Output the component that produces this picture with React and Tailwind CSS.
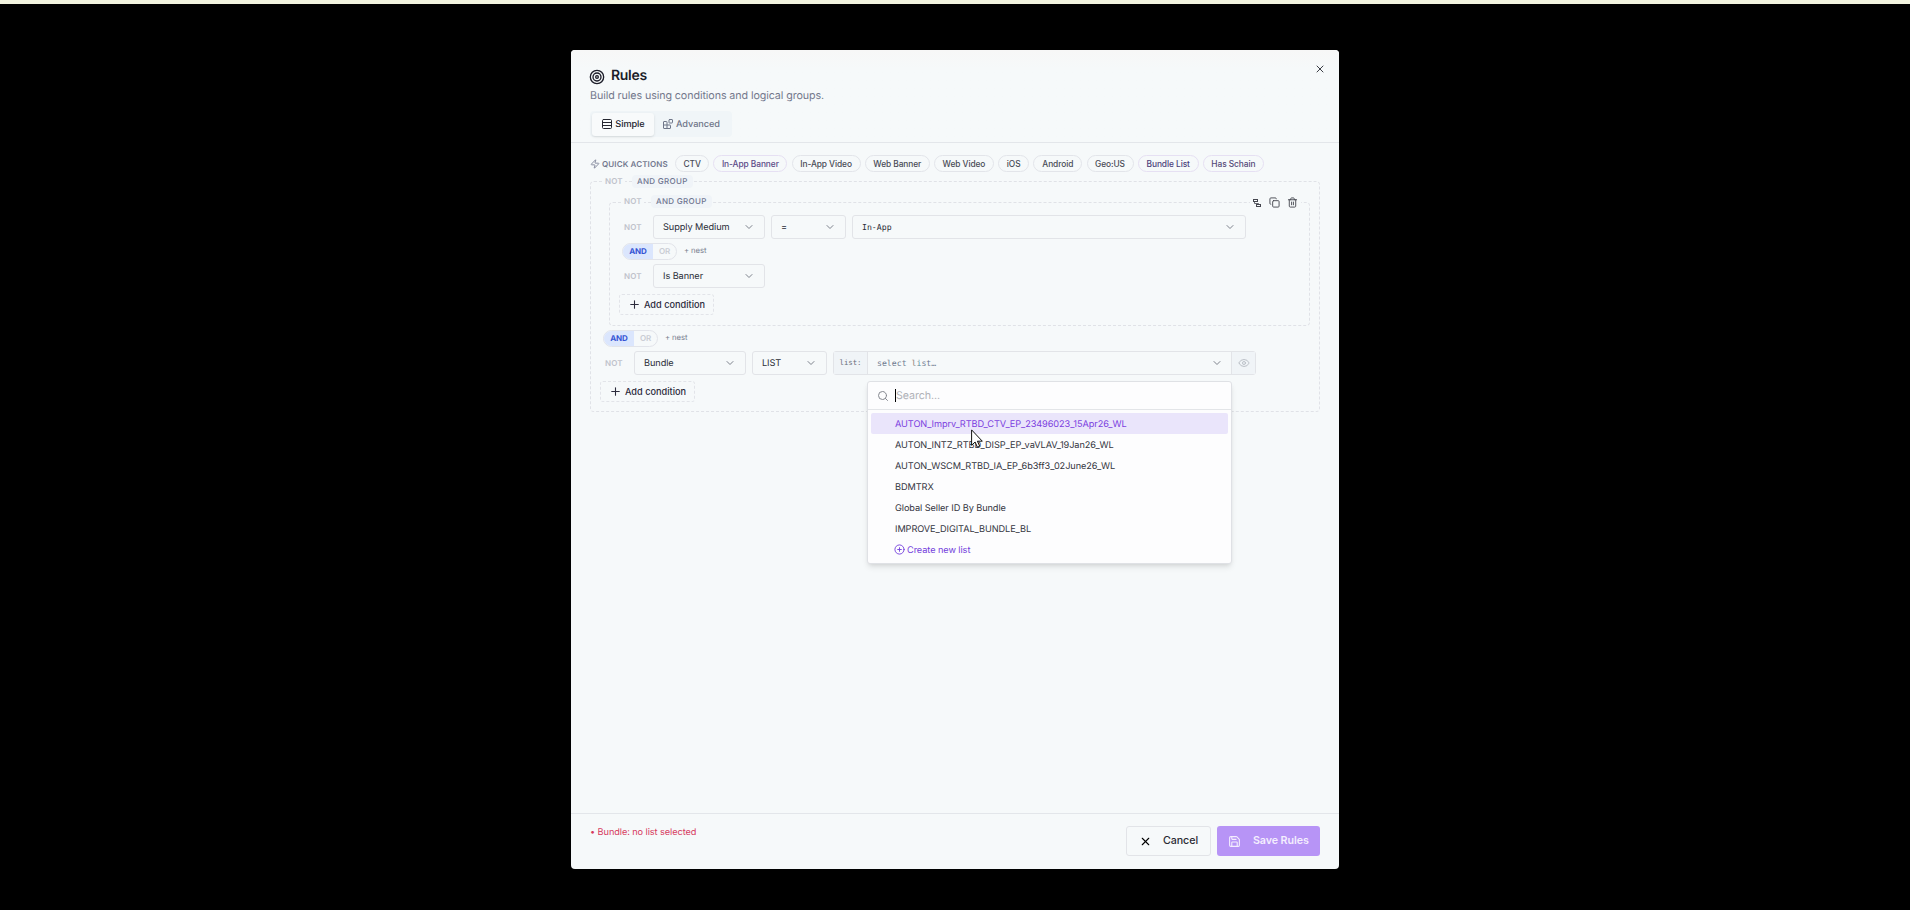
import { useState } from "react";
import {
  LuBlocks,
  LuChevronDown,
  LuCirclePlus,
  LuCopy,
  LuEye,
  LuPlus,
  LuRows3,
  LuSave,
  LuSearch,
  LuTarget,
  LuTrash2,
  LuX,
  LuZap,
} from "react-icons/lu";

const quickActions = [
  { label: "CTV", style: "w-[34px] text-[#484b56] border-[#e3e5ea]" },
  { label: "In-App Banner", style: "w-[74px] text-[#5b4a86] border-[#e6e0f3]" },
  { label: "In-App Video", style: "w-[69px] text-[#484b56] border-[#e3e5ea]" },
  { label: "Web Banner", style: "w-[65px] text-[#484b56] border-[#e3e5ea]" },
  { label: "Web Video", style: "w-[60px] text-[#484b56] border-[#e3e5ea]" },
  { label: "iOS", style: "w-[31px] text-[#484b56] border-[#e3e5ea]" },
  { label: "Android", style: "w-[49px] text-[#484b56] border-[#e3e5ea]" },
  { label: "Geo:US", style: "w-[47px] text-[#484b56] border-[#e3e5ea]" },
  { label: "Bundle List", style: "w-[61px] text-[#4b3f7a] border-[#e6e0f3]" },
  { label: "Has Schain", style: "w-[61px] text-[#544a78] border-[#e6e0f3]" },
];

const lists = [
  "AUTON_Imprv_RTBD_CTV_EP_23496023_15Apr26_WL",
  "AUTON_INTZ_RTBD_DISP_EP_vaVLAV_19Jan26_WL",
  "AUTON_WSCM_RTBD_IA_EP_6b3ff3_02June26_WL",
  "BDMTRX",
  "Global Seller ID By Bundle",
  "IMPROVE_DIGITAL_BUNDLE_BL",
];

function Not() {
  return (
    <span className="w-[29px] shrink-0 text-[8px] font-semibold tracking-[0.2px] text-[#bfc2cb]">
      NOT
    </span>
  );
}

function SelectBox({ className, children }) {
  return (
    <div
      className={`flex h-6 shrink-0 items-center justify-between rounded-[3px] border border-[#e2e4e8] pl-[9px] pr-[9px] text-[#2b2d38] ${className}`}
    >
      <span>{children}</span>
      <LuChevronDown className="size-[12px] text-[#7d828c]" />
    </div>
  );
}

function Joiner() {
  return (
    <div className="flex h-[17px] items-center">
      <div className="flex h-full w-[55px] overflow-hidden rounded-full border border-[#e2e4ea] text-[8px] font-semibold">
        <span className="flex w-[30px] items-center justify-center bg-[#dbe6fd] pb-px font-bold text-[#3555d4]">
          AND
        </span>
        <span className="flex flex-1 items-center justify-center pb-px text-[#c9ccd3]">OR</span>
      </div>
      <span className="ml-[7px] pb-px text-[7.7px] text-[#7b8090]">+ nest</span>
    </div>
  );
}

function AddCondition() {
  return (
    <button className="flex h-[21px] w-[95px] items-center justify-center gap-[3px] rounded-[3px] border border-dashed border-[#e2e4e9] font-medium text-[#2c2b3c]">
      <LuPlus className="size-[13px]" />
      <span className="tracking-normal">Add condition</span>
    </button>
  );
}

// labels sitting on top of a group's dashed border
function GroupLegend({ className }) {
  return (
    <div
      className={`absolute left-[12px] flex h-[14px] items-center text-[8px] font-medium tracking-[0.3px] ${className}`}
    >
      <span className="bg-[#f6f9fa] px-[2px] font-semibold tracking-[0.2px] text-[#bfc2cb]">
        NOT
      </span>
      <span className="ml-[7px] flex h-[13px] w-[61px] items-center justify-center rounded-sm bg-[#f0f4f8] text-[#6f7590]">
        AND GROUP
      </span>
    </div>
  );
}

function NestIcon() {
  return (
    <svg
      viewBox="0 0 8 8"
      className="mr-px size-[8px]"
      fill="none"
      stroke="currentColor"
      strokeWidth="1"
    >
      <rect x="0.5" y="0.5" width="4" height="2" />
      <rect x="3.5" y="5.5" width="4" height="2" />
      <path d="M1.5 2.5v2h4v1" strokeWidth="0.8" />
    </svg>
  );
}

export default function App() {
  const [active, setActive] = useState(0);

  return (
    <div className="flex h-[910px] w-[1910px] flex-col overflow-hidden bg-black font-['Inter',sans-serif] text-[9.2px] leading-none tracking-[-0.08px] [text-rendering:geometricPrecision]">
      <div className="h-1 shrink-0 bg-[#f2f4e0]" />

      <div className="relative ml-[571px] mt-[46px] flex h-[819px] w-[768px] flex-col rounded-[4px] bg-[#f6f9fa]">
        <LuX className="absolute right-[13px] top-[13px] size-[12px] text-[#3b3d45]" />

        {/* header */}
        <div className="flex h-[93px] shrink-0 flex-col items-start rounded-t-[4px] border-b border-[#e3e6ea] bg-linear-to-b from-[#f7f7f7] to-[#f6f9fa] to-20% pl-[19px] pt-[18px]">
          <div className="flex h-[16px] items-center gap-[5px] text-[#1b1c28]">
            <LuTarget className="-ml-[1px] mt-px size-[16px]" />
            <h1 className="ml-px text-[14px] font-semibold tracking-[-0.3px]">Rules</h1>
          </div>
          <p className="mt-[5px] text-[10.7px] leading-[13px] text-[#73788c]">
            Build rules using conditions and logical groups.
          </p>
          <div className="mt-[9px] flex h-[26px] items-center rounded-[4px] bg-[#f0f5f8] pl-[2px] font-medium">
            <div className="flex h-[23px] w-[62px] items-center justify-center gap-[2px] rounded-[3px] bg-[#f8fafb] text-[#24252f] shadow-sm">
              <LuRows3 className="size-[12px]" />
              <span className="pt-[2px]">Simple</span>
            </div>
            <div className="flex h-[23px] w-[78px] items-center gap-[2px] pl-[8px] text-[#6f7689]">
              <LuBlocks className="size-[12px]" />
              <span className="pt-[2px]">Advanced</span>
            </div>
          </div>
        </div>

        <div className="flex flex-1 flex-col px-[19px] pt-[12px]">
          <div className="flex h-[17px] items-center gap-[4.2px]">
            <div className="flex w-[81px] items-center gap-[2px] text-[8px] font-semibold tracking-[0.12px] text-[#73788f]">
              <LuZap className="size-[10px]" />
              QUICK ACTIONS
            </div>
            {quickActions.map((action) => (
              <button
                key={action.label}
                className={`flex h-[17px] shrink-0 items-center justify-center whitespace-nowrap rounded-full border pt-[2px] text-[8.4px] font-medium ${action.style}`}
              >
                {action.label}
              </button>
            ))}
          </div>

          {/* outer group */}
          <div className="relative mt-[9px] h-[231px] w-[730px] rounded-[4px] border border-dashed border-[#e0e2e7]">
            <GroupLegend className="-top-[8px]" />

            {/* inner group */}
            <div className="relative ml-[18px] mt-[20px] h-[124px] w-[701px] rounded-[4px] border border-dashed border-[#e0e2e7] pt-[12px]">
              <GroupLegend className="-top-[9px]" />
              <div className="absolute -top-[7px] right-[8px] flex h-[13px] items-center gap-[7px] bg-[#f6f9fa] px-[3px] text-[#45474f]">
                <NestIcon />
                <LuCopy className="size-[11px]" />
                <LuTrash2 className="size-[11px]" />
              </div>
              <div className="flex items-center pl-[14px]">
                <Not />
                <SelectBox className="w-[112px] *:first:pt-[2px]">Supply Medium</SelectBox>
                <SelectBox className="ml-[6px] w-[75px] *:first:pt-[2px]">=</SelectBox>
                <SelectBox className="ml-[6px] w-[394px] font-['DejaVu_Sans_Mono',monospace] text-[8.2px] tracking-normal">
                  In-App
                </SelectBox>
              </div>
              <div className="mt-1 pl-[12px]">
                <Joiner />
              </div>
              <div className="mt-1 flex items-center pl-[14px]">
                <Not />
                <SelectBox className="w-[112px] *:first:pt-[2px]">Is Banner</SelectBox>
              </div>
              <div className="mt-[6px] pl-[9px]">
                <AddCondition />
              </div>
            </div>

            <div className="mt-1 pl-[12px]">
              <Joiner />
            </div>
            <div className="mt-1 flex items-center pl-[14px]">
              <Not />
              <SelectBox className="w-[112px] *:first:pt-[2px]">Bundle</SelectBox>
              <SelectBox className="ml-[6px] w-[75px] *:first:pt-[2px]">LIST</SelectBox>
              <div className="relative ml-[6px] flex h-6 w-[423px] rounded-[3px] border border-[#e2e4e8] font-['DejaVu_Sans_Mono',monospace]">
                <span className="flex w-[34px] items-center justify-center border-r border-[#e2e4e8] bg-[#f0f4f7] text-[7.4px] text-[#6a6f7b]">
                  list:
                </span>
                <div className="flex flex-1 items-center justify-between pl-[9px] pr-[8px] text-[8.2px] tracking-normal text-[#6f7a90]">
                  <span>
                    select <span className="text-[#8a7f74]">l</span>
                    <span className="text-[#5f8f9c]">i</span>st…
                  </span>
                  <LuChevronDown className="size-[12px] text-[#7d828c]" />
                </div>
                <span className="flex w-[24px] items-center justify-center border-l border-[#e2e4e8] bg-[#f0f4f7] text-[#bcc1c8]">
                  <LuEye className="size-[12px]" />
                </span>

                {/* list picker */}
                <div className="absolute left-[33px] top-[29px] z-10 h-[183px] w-[365px] rounded-[3px] border border-[#dfe1e5] bg-[#fdfdfe] font-['Inter',sans-serif] shadow-md">
                  <div className="flex h-[28px] items-center border-b border-[#e3e5e8] pl-[9px]">
                    <LuSearch className="size-[12px] text-[#85888f]" />
                    <span className="ml-[6px] h-[13px] w-px bg-black" />
                    <span className="pt-[2px] text-[10.7px] text-[#b0b2b8]">Search...</span>
                  </div>
                  <div className="px-[3px] pt-[3px] text-[#34353f]">
                    {lists.map((name, i) => (
                      <div
                        key={name}
                        onMouseEnter={() => setActive(i)}
                        className={`flex h-[21px] items-center rounded-[2px] pl-[24px] pt-[2px] ${
                          active === i ? "bg-[#eae5fb] text-[#7c3fe0]" : ""
                        }`}
                      >
                        {name}
                      </div>
                    ))}
                    <div className="flex h-[21px] items-center gap-[2px] pl-[23px] text-[#7340dc]">
                      <LuCirclePlus className="size-[11px]" />
                      <span className="pt-[2px]">Create new list</span>
                    </div>
                  </div>
                  <svg
                    viewBox="0 0 12 19"
                    className="absolute left-[103px] top-[47px] h-[19px] w-[12px]"
                    fill="#fff"
                    stroke="#111"
                    strokeWidth="1"
                  >
                    <path d="M.6.9v15.4l3.5-3.3 2.3 5.2 2.3-1-2.3-5h4.9z" />
                  </svg>
                </div>
              </div>
            </div>
            <div className="mt-[6px] pl-[9px]">
              <AddCondition />
            </div>
          </div>
        </div>

        {/* footer */}
        <div className="flex h-[56px] shrink-0 items-start justify-between border-t border-[#e3e6ea] pl-[19px] pr-[19px] pt-[12px]">
          <p className="mt-[2px] text-[#d63a5e]">• Bundle: no list selected</p>
          <div className="flex gap-[6px] text-[10.7px]">
            <button className="flex h-[30px] w-[85px] items-center rounded-[3px] border border-[#e2e4e8] pl-[12px] font-medium text-[#2a2b33]">
              <LuX className="mr-[11px] size-[13px] text-black" />
              <span className="pt-px">Cancel</span>
            </button>
            <button className="flex h-[30px] w-[103px] items-center rounded-[3px] bg-[#b794f6] pl-[11px] font-semibold text-[#f4eefe]">
              <LuSave className="mr-[12px] size-[13px]" />
              <span className="pt-px">Save Rules</span>
            </button>
          </div>
        </div>
      </div>
    </div>
  );
}
